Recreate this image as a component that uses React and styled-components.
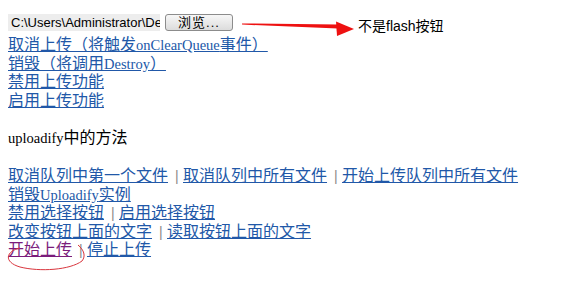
import React from 'react'
import styled, { createGlobalStyle } from 'styled-components'

const GlobalStyle = createGlobalStyle`
  body {
    margin: 0;
    background: #fff;
  }
`

const Page = styled.div`
  position: relative;
  width: 583px;
  height: 282px;
  box-sizing: border-box;
  padding: 14px 8px 0 8px;
  font-family: "Liberation Serif", "Noto Sans CJK SC", serif;
  font-size: 16px;
  color: #000;
  overflow: hidden;
`

const UploadRow = styled.div`
  display: flex;
  align-items: flex-start;
  height: 17px;
  margin-bottom: 5px;
`

const FileBox = styled.div`
  width: 152px;
  height: 17px;
  box-sizing: border-box;
  padding-left: 3px;
  background: #ededed;
  font: 13px/17px "Liberation Sans", "Noto Sans CJK SC", sans-serif;
  white-space: nowrap;
  overflow: hidden;
`

const BrowseButton = styled.div`
  width: 68px;
  height: 17px;
  margin-left: 5px;
  box-sizing: border-box;
  border: 1px solid #8c8c8c;
  border-radius: 3px;
  background: linear-gradient(#f7f7f7, #dcdcdc);
  font: 13px/15px "Liberation Sans", "Noto Sans CJK SC", sans-serif;
  text-align: center;
  letter-spacing: 1px;
`

const Arrow = styled.svg`
  width: 116px;
  height: 24px;
  margin-left: 7px;
  flex: none;
`

const Note = styled.span`
  margin-left: 2px;
  margin-top: 4px;
  font: 14px/16px "Liberation Sans", "Noto Sans CJK SC", sans-serif;
`

const Block = styled.div`
  margin-top: ${p => p.$gap || 0}px;
  line-height: 18.5px;
`

const Line = styled.div`
  height: 18.5px;
  white-space: nowrap;
`

const Link = styled.a`
  color: ${p => (p.$visited ? '#7b1c7b' : '#2158a8')};
  text-decoration: underline;
  cursor: pointer;
`

const Lat = styled.span`
  font-size: 14.5px;
`

const Sep = styled.span`
  display: inline-block;
  width: 15px;
  padding-left: 7px;
  box-sizing: border-box;
  color: #8a8a8a;
  font-family: "Liberation Sans", sans-serif;
  font-size: 14px;
`

const Title = styled.div`
  margin-top: 18px;
  line-height: 19px;
`

const Overlay = styled.svg`
  position: absolute;
  left: 0;
  top: 0;
  pointer-events: none;
`

function Links({ items }) {
  return (
    <Line>
      {items.map((it, i) => (
        <React.Fragment key={i}>
          {i > 0 && <Sep>|</Sep>}
          <Link $visited={it.visited}>{it.label}</Link>
        </React.Fragment>
      ))}
    </Line>
  )
}

export default function App() {
  return (
    <>
      <GlobalStyle />
      <Page>
        <UploadRow>
          <FileBox>C:\Users\Administrator\Desktop\test.jpg</FileBox>
          <BrowseButton>浏览...</BrowseButton>
          <Arrow viewBox="0 0 116 24">
            <polygon points="2,9.4 98,10.6 98,14.6 2,10.6" fill="#ee1111" />
            <polygon points="96,7.5 114,15 97,22" fill="#ee1111" />
          </Arrow>
          <Note>不是flash按钮</Note>
        </UploadRow>

        <Block>
          <Line><Link>取消上传（将触发<Lat>onClearQueue</Lat>事件）</Link></Line>
          <Line><Link>销毁（将调用<Lat>Destroy</Lat>）</Link></Line>
          <Line><Link>禁用上传功能</Link></Line>
          <Line><Link>启用上传功能</Link></Line>
        </Block>

        <Title><Lat>uploadify</Lat>中的方法</Title>

        <Block $gap={19}>
          <Links items={[{ label: '取消队列中第一个文件' }, { label: '取消队列中所有文件' }, { label: '开始上传队列中所有文件' }]} />
          <Line><Link>销毁<Lat>Uploadify</Lat>实例</Link></Line>
          <Links items={[{ label: '禁用选择按钮' }, { label: '启用选择按钮' }]} />
          <Links items={[{ label: '改变按钮上面的文字' }, { label: '读取按钮上面的文字' }]} />
          <Links items={[{ label: '开始上传', visited: true }, { label: '停止上传' }]} />
        </Block>

        <Overlay width="583" height="282" viewBox="0 0 583 282">
          <path
            d="M 20 248 C 6 251, 3 262, 20 267 C 40 272, 70 270, 82 261 C 86 256, 84 250, 78 245"
            fill="none"
            stroke="#d9363e"
            strokeWidth="1"
          />
        </Overlay>
      </Page>
    </>
  )
}
